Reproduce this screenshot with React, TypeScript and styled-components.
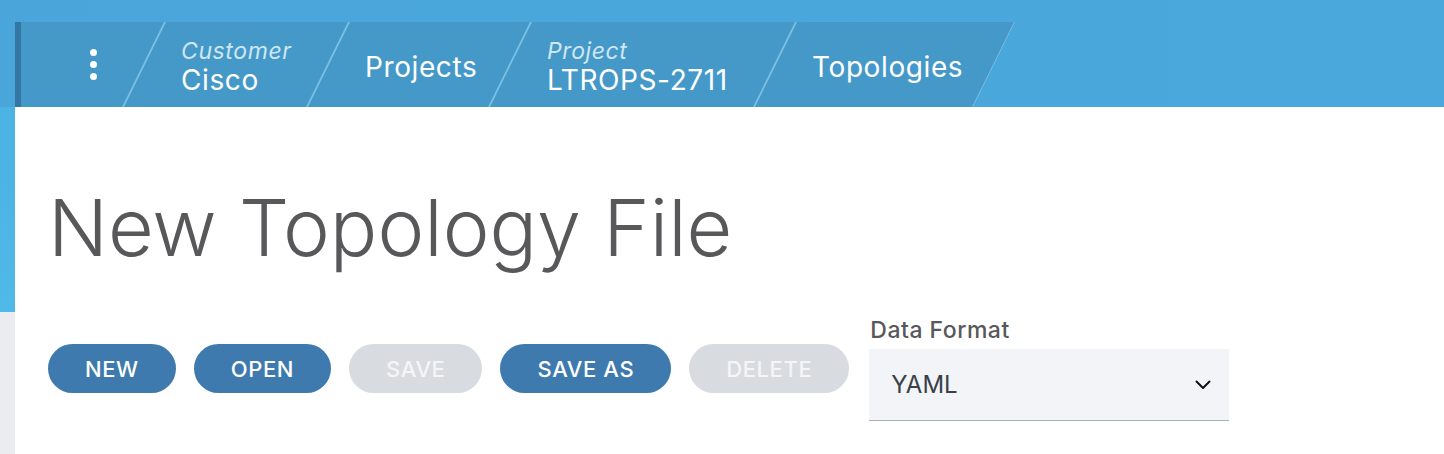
import React from "react";
import styled, { createGlobalStyle } from "styled-components";

const Global = createGlobalStyle`
  html, body { margin: 0; padding: 0; background: #ffffff; }
  body { font-family: Inter, "Liberation Sans", Arial, sans-serif; width: 1444px; height: 454px; overflow: hidden; }
  * { box-sizing: border-box; }
`;

const Page = styled.div`
  width: 1444px;
  height: 454px;
  display: flex;
  flex-direction: column;
`;

const Header = styled.header`
  height: 107px;
  padding: 22px 0 0 15px;
  background: linear-gradient(90deg, #4aa6da 0%, #4aa8dc 100%);
  display: flex;
`;

const Crumbs = styled.nav`
  height: 85px;
  display: flex;
  align-items: stretch;
  background: #4599c8;
  border-left: 6px solid #3476a3;
  clip-path: polygon(0 0, 100% 0, calc(100% - 42px) 100%, 0 100%);
  padding-right: 21px;
`;

const Crumb = styled.div<{ $w: number }>`
  position: relative;
  width: ${(p) => p.$w}px;
  padding-left: 37px;
  padding-top: 5px;
  display: flex;
  flex-direction: column;
  justify-content: center;
  color: #ffffff;
  white-space: nowrap;
  &::after {
    content: "";
    position: absolute;
    top: 0;
    right: -1px;
    width: 2px;
    height: 100%;
    background: #7cc0e2;
    transform: skewX(-26.3deg);
  }
`;

const MenuCrumb = styled(Crumb)`
  padding: 0 0 0 21px;
  align-items: center;
`;

const Dots = styled.div`
  display: flex;
  flex-direction: column;
  gap: 5px;
  & > span {
    width: 7px;
    height: 7px;
    border-radius: 50%;
    background: #ffffff;
  }
`;

const Kicker = styled.span`
  font-style: italic;
  font-size: 23px;
  line-height: 26px;
  color: #cfe6f3;
  font-weight: 400;
  letter-spacing: 0.6px;
`;

const CrumbText = styled.span`
  font-size: 28px;
  line-height: 32px;
  font-weight: 400;
  letter-spacing: 0.6px;
`;

const Body = styled.div`
  flex: 1;
  display: flex;
`;

const Rail = styled.aside`
  width: 15px;
  background: linear-gradient(180deg, #4bb2e4 0px, #4fb9e8 205px, #ebecf0 205px, #ebecf0 100%);
`;

const Content = styled.main`
  flex: 1;
  padding: 72px 0 0 33px;
  display: flex;
  flex-direction: column;
`;

const Title = styled.h1`
  margin: 0;
  font-size: 79px;
  line-height: 96px;
  font-weight: 300;
  color: #58585b;
  letter-spacing: 0px;
`;

const Toolbar = styled.div`
  margin-top: 41px;
  display: flex;
  align-items: flex-end;
  gap: 18px;
`;

const Buttons = styled.div`
  display: flex;
  gap: 18px;
  padding-bottom: 28px;
`;

const Pill = styled.button<{ $disabled?: boolean }>`
  height: 49px;
  padding: 0 37px;
  border: none;
  border-radius: 25px;
  font-family: Inter, "Liberation Sans", Arial, sans-serif;
  font-size: 22px;
  font-weight: 500;
  letter-spacing: 0.6px;
  background: ${(p) => (p.$disabled ? "#d8dce0" : "#3e7aad")};
  color: ${(p) => (p.$disabled ? "#f4f5f7" : "#ffffff")};
  cursor: ${(p) => (p.$disabled ? "default" : "pointer")};
`;

const Field = styled.div`
  display: flex;
  flex-direction: column;
  width: 360px;
  margin-left: 2px;
`;

const Label = styled.label`
  font-size: 23px;
  line-height: 28px;
  font-weight: 500;
  color: #58585b;
  padding-left: 1px;
  margin-bottom: 5px;
  letter-spacing: 0.5px;
`;

const Select = styled.div`
  height: 72px;
  background: #f2f4f7;
  border-bottom: 1px solid #a9afb7;
  display: flex;
  align-items: center;
  justify-content: space-between;
  padding: 0 18px 0 22px;
  font-size: 24px;
  color: #394049;
`;

const Chevron = () => (
  <svg width="16" height="10" viewBox="0 0 16 10" fill="none">
    <path d="M1.5 1.5 L8 8 L14.5 1.5" stroke="#111" strokeWidth="2" strokeLinecap="round" strokeLinejoin="round" />
  </svg>
);

export default function App() {
  return (
    <Page>
      <Global />
      <Header>
        <Crumbs>
          <MenuCrumb $w={123}>
            <Dots>
              <span />
              <span />
              <span />
            </Dots>
          </MenuCrumb>
          <Crumb $w={184}>
            <Kicker>Customer</Kicker>
            <CrumbText>Cisco</CrumbText>
          </Crumb>
          <Crumb $w={182}>
            <CrumbText>Projects</CrumbText>
          </Crumb>
          <Crumb $w={265}>
            <Kicker>Project</Kicker>
            <CrumbText>LTROPS-2711</CrumbText>
          </Crumb>
          <Crumb $w={219}>
            <CrumbText>Topologies</CrumbText>
          </Crumb>
        </Crumbs>
      </Header>
      <Body>
        <Rail />
        <Content>
          <Title>New Topology File</Title>
          <Toolbar>
            <Buttons>
              <Pill>NEW</Pill>
              <Pill>OPEN</Pill>
              <Pill $disabled>SAVE</Pill>
              <Pill>SAVE AS</Pill>
              <Pill $disabled>DELETE</Pill>
            </Buttons>
            <Field>
              <Label>Data Format</Label>
              <Select>
                <span>YAML</span>
                <Chevron />
              </Select>
            </Field>
          </Toolbar>
        </Content>
      </Body>
    </Page>
  );
}
